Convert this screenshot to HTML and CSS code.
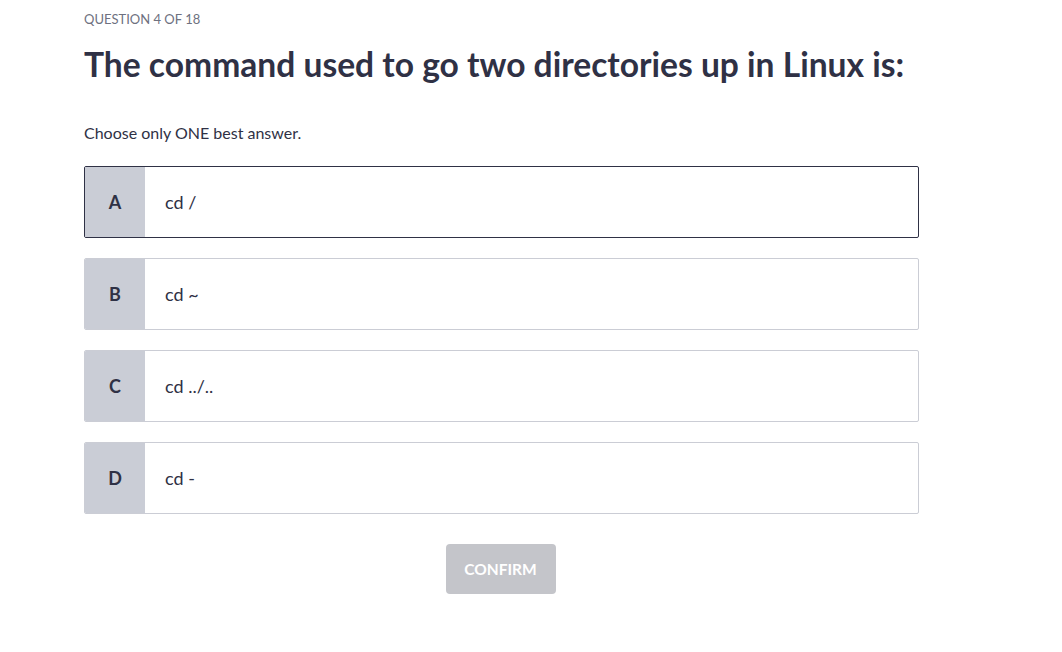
FILE: index.html
```html
<!DOCTYPE html>
<html lang="en">
<head>
<meta charset="utf-8">
<title>Question 4 of 18</title>
<link rel="stylesheet" href="styles.css">
</head>
<body>
<main class="quiz">
  <div class="counter">QUESTION 4 OF 18</div>
  <h1 class="question">The command used to go two directories up in Linux is:</h1>
  <p class="hint">Choose only ONE best answer.</p>
  <div class="options">
    <div class="option selected"><span class="letter">A</span><span class="text">cd /</span></div>
    <div class="option"><span class="letter">B</span><span class="text">cd ~</span></div>
    <div class="option"><span class="letter">C</span><span class="text">cd ../..</span></div>
    <div class="option"><span class="letter">D</span><span class="text">cd -</span></div>
  </div>
  <div class="actions"><button class="confirm" type="button">CONFIRM</button></div>
</main>
</body>
</html>
```
FILE: styles.css
```css
* { box-sizing: border-box; }
html, body { margin: 0; padding: 0; background: #ffffff; }
body {
  font-family: "Lato", "Open Sans", sans-serif;
  color: #2f3145;
}
.quiz {
  width: 835px;
  margin-left: 84px;
  padding-top: 10px;
  display: flex;
  flex-direction: column;
}
.counter {
  font-size: 13px;
  line-height: 18px;
  color: #6e7180;
}
.question {
  margin: 15px 0 0;
  font-size: 33.6px;
  line-height: 42px;
  font-weight: 700;
  color: #2f3145;
}
.hint {
  margin: 38px 0 0;
  font-size: 16px;
  line-height: 20px;
  color: #2f3145;
}
.options {
  margin-top: 23px;
  display: flex;
  flex-direction: column;
  gap: 20px;
}
.option {
  display: flex;
  height: 72px;
  border: 1px solid #cbcdd5;
  border-radius: 2px;
  overflow: hidden;
  background: #fff;
}
.option.selected { border-color: #2f3145; }
.letter {
  width: 60px;
  flex: none;
  background: #cacdd6;
  display: flex;
  align-items: center;
  justify-content: center;
  font-size: 18px;
  font-weight: 700;
  color: #2f3145;
}
.text {
  display: flex;
  align-items: center;
  padding-left: 20px;
  font-size: 18px;
  color: #2f3145;
}
.actions {
  display: flex;
  justify-content: center;
  margin-top: 30px;
}
.confirm {
  width: 110px;
  height: 50px;
  border: none;
  border-radius: 4px;
  background: #c4c5ca;
  color: #ffffff;
  font-family: inherit;
  font-size: 15.5px;
  font-weight: 700;
  padding: 0;
  margin-left: -2px;
}
```
